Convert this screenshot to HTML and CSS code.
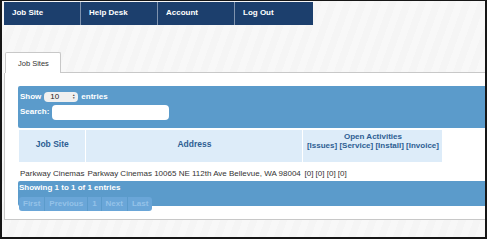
FILE: index.html
```html
<!DOCTYPE html>
<html lang="en">
<head>
    <meta charset="UTF-8">
    <title>Job Sites</title>
    <link rel="stylesheet" href="styles.css">
</head>
<body>
    <div class="frame">
        <!-- Menu principal -->
        <ul class="nav">
            <li>Job Site</li>
            <li>Help Desk</li>
            <li>Account</li>
            <li>Log Out</li>
        </ul>

        <div class="tabs">
            <div class="tab">Job Sites</div>
            <div class="tab-line"></div>
        </div>

        <div class="panel">
            <div class="toolbar">
                <div class="row">
                    <span>Show</span>
                    <span class="select">10 <span class="arrows">&#9650;<br>&#9660;</span></span>
                    <span>entries</span>
                </div>
                <div class="row">
                    <span>Search:</span>
                    <span class="search"></span>
                </div>
            </div>

            <table class="grid">
                <thead>
                    <tr>
                        <th class="c1">Job Site</th>
                        <th class="c2">Address</th>
                        <th class="c3">Open Activities<br>[Issues] [Service] [Install] [Invoice]</th>
                    </tr>
                </thead>
                <tbody>
                    <tr>
                        <td>Parkway Cinemas</td>
                        <td>Parkway Cinemas 10065 NE 112th Ave Bellevue, WA 98004</td>
                        <td>[0] [0] [0] [0]</td>
                    </tr>
                </tbody>
            </table>

            <div class="footer">
                <div class="info">Showing 1 to 1 of 1 entries</div>
                <div class="pager">
                    <span>First</span><span>Previous</span><span>1</span><span>Next</span><span>Last</span>
                </div>
            </div>
        </div>
    </div>
</body>
</html>
```

FILE: styles.css
```css
body {
    margin: 0;
    font-family: "Liberation Sans", Arial, sans-serif;
    background-color: #fff;
}
.frame {
    width: 483px;
    height: 235px;
    border: 2px solid #161616;
    border-top-width: 1px;
    padding-top: 1px;
    background: repeating-linear-gradient(110deg, #f5f5f5 0 7px, #f8f8f8 7px 14px);
    overflow: hidden;
}
.nav {
    list-style: none;
    margin: 0 0 0 2px;
    padding: 0;
    display: flex;
    width: 309px;
    height: 23px;
    background-color: #1c3f6d;
}
.nav li {
    width: 77px;
    border-right: 1px solid #7f93ae;
    color: #fff;
    font-size: 8px;
    font-weight: bold;
    padding: 6px 0 0 8px;
    box-sizing: border-box;
}
.nav li:last-child {
    border-right: none;
}
.tabs {
    display: flex;
    align-items: flex-end;
    margin-top: 26px;
    padding-left: 3px;
    height: 22px;
}
.tab {
    width: 56px;
    height: 21px;
    background-color: #fff;
    border: 1px solid #c8c8c8;
    border-bottom: none;
    border-radius: 2px 2px 0 0;
    font-size: 7.5px;
    color: #333;
    padding: 6px 0 0 12px;
    box-sizing: border-box;
}
.tab-line {
    flex: 1;
    border-bottom: 1px solid #c8c8c8;
}
.panel {
    margin-left: 2px;
    height: 147px;
    background-color: #fff;
    border-left: 1px solid #c8c8c8;
    border-bottom: 1px solid #c8c8c8;
    padding: 13px 0 0 13px;
    box-sizing: border-box;
}
.toolbar {
    background-color: #5b9bcb;
    height: 42px;
    border-radius: 2px 0 0 2px;
    padding: 3px 0 0 2px;
    box-sizing: border-box;
    color: #fff;
    font-size: 8px;
    font-weight: bold;
}
.row {
    display: flex;
    align-items: center;
    gap: 3px;
    height: 15px;
}
.select {
    display: inline-flex;
    align-items: center;
    justify-content: space-between;
    width: 34px;
    height: 10px;
    background-color: #f0f0f0;
    border-radius: 4px;
    color: #222;
    font-weight: normal;
    padding: 0 3px 0 6px;
    box-sizing: border-box;
    font-size: 8px;
}
.arrows {
    font-size: 3px;
    line-height: 3px;
    color: #444;
}
.search {
    display: inline-block;
    width: 117px;
    height: 15px;
    background-color: #fff;
    border-radius: 4px;
    margin-top: 2px;
}
.grid {
    border-collapse: separate;
    border-spacing: 1px 2px;
    font-size: 8px;
    color: #333;
}
.grid th {
    background-color: #ddecf9;
    color: #2d5e93;
    font-size: 8.5px;
    font-weight: bold;
    height: 32px;
    padding: 2px 0 0;
    vertical-align: top;
    white-space: nowrap;
    box-sizing: border-box;
}
.grid th.c1 { width: 66px; padding-top: 9px; }
.grid th.c2 { width: 216px; padding-top: 9px; }
.grid th.c3 { width: 139px; font-size: 8px; }
.grid td {
    height: 15px;
    padding: 3px 1px 0;
    box-sizing: border-box;
    white-space: nowrap;
}
.footer {
    background-color: #5b9bcb;
    height: 25px;
    border-radius: 2px 0 0 2px;
    padding: 2px 0 0 1px;
    box-sizing: border-box;
}
.info {
    color: #fff;
    font-size: 8px;
    font-weight: bold;
}
.pager {
    display: inline-flex;
    margin-top: 1px;
    background-color: #6aa6d8;
    border-radius: 3px;
}
.pager span {
    font-size: 8px;
    font-weight: bold;
    color: #94c2e8;
    padding: 2px 4px 3px;
    border-right: 1px solid #5b9bcb;
}
.pager span:last-child {
    border-right: none;
}
```
